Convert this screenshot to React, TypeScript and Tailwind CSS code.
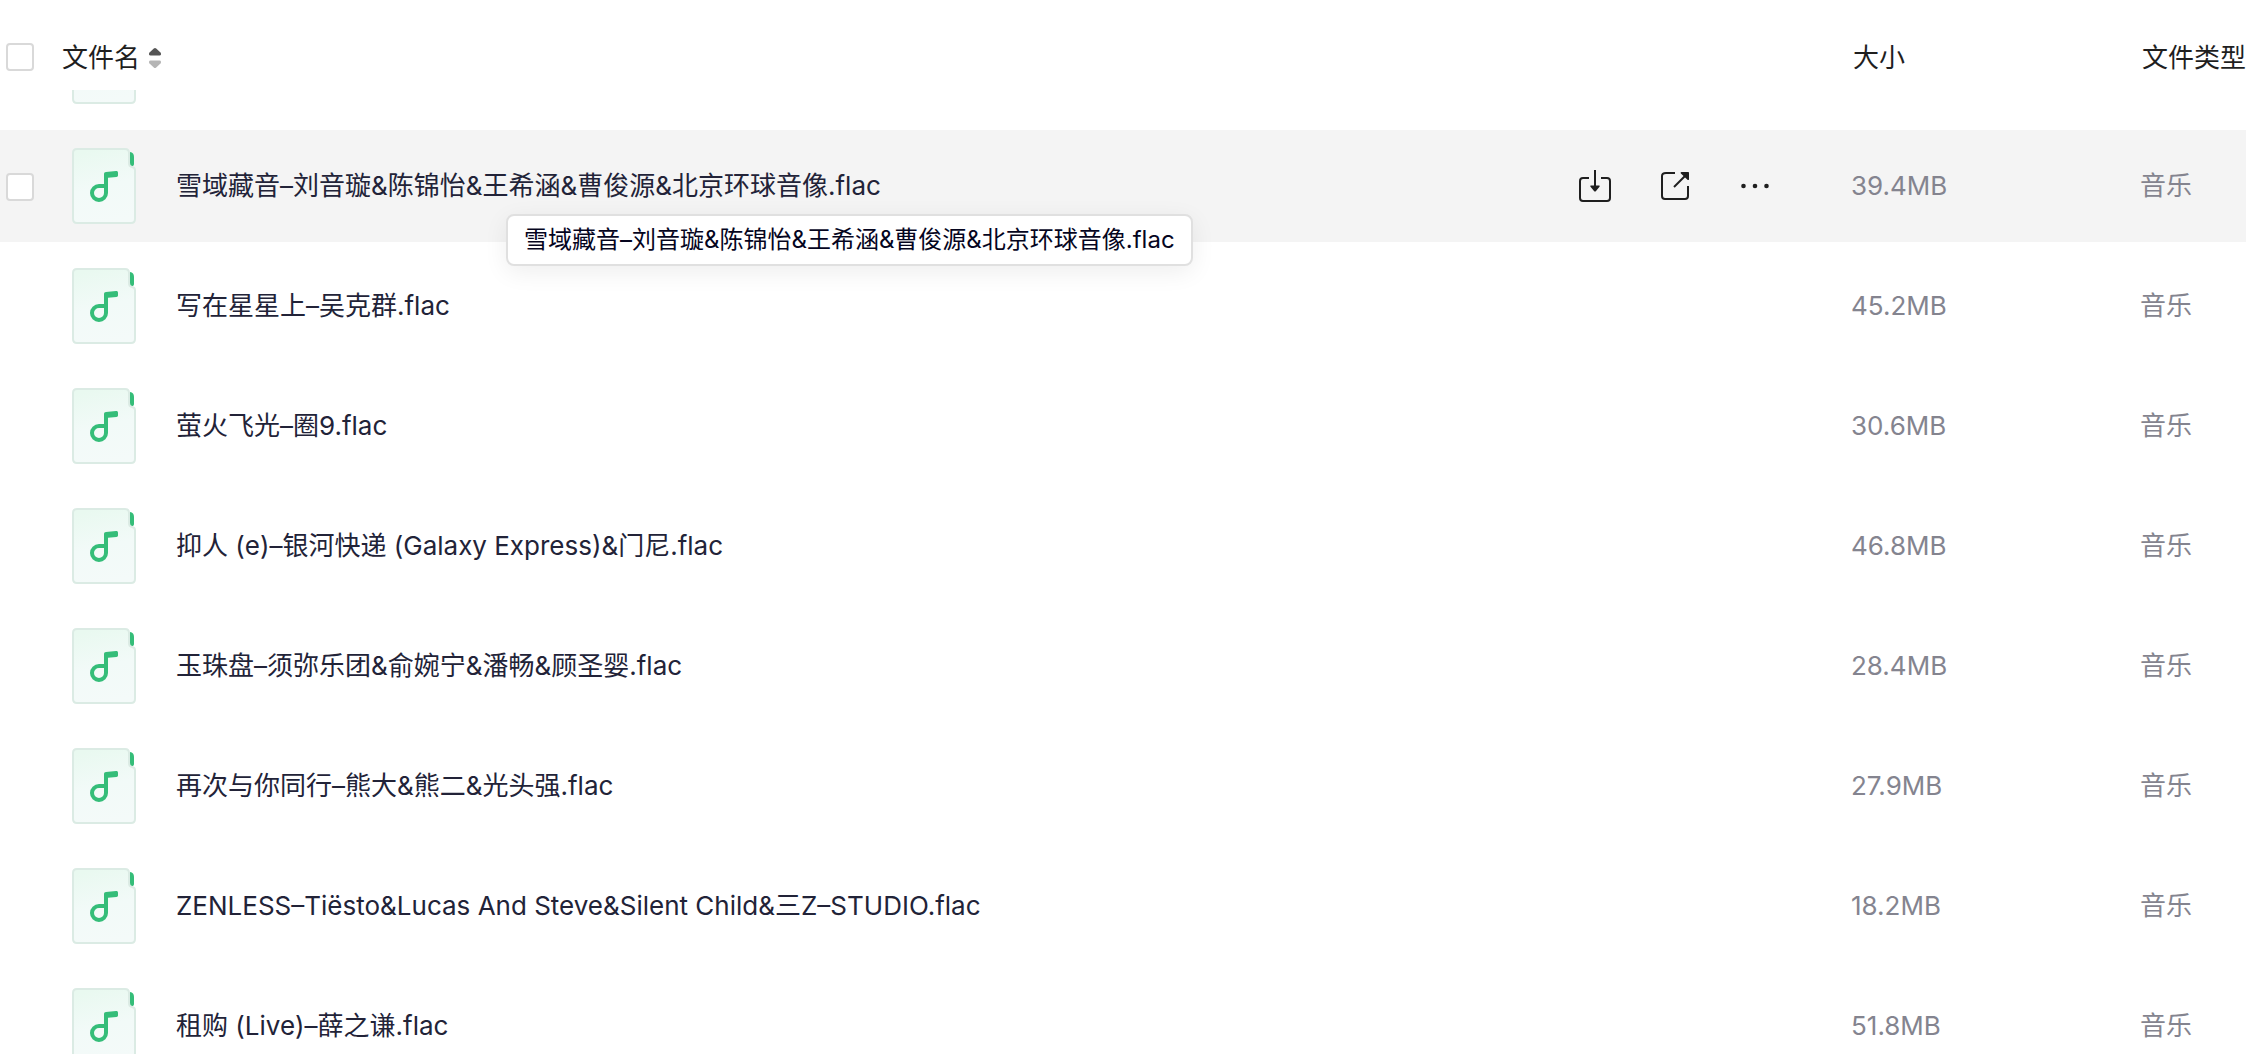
type Song = { name: string; size: string; active?: boolean };

const songs: Song[] = [
  { name: "雪域藏音–刘音璇&陈锦怡&王希涵&曹俊源&北京环球音像.flac", size: "39.4MB", active: true },
  { name: "写在星星上–吴克群.flac", size: "45.2MB" },
  { name: "萤火飞光–圈9.flac", size: "30.6MB" },
  { name: "抑人 (e)–银河快递 (Galaxy Express)&门尼.flac", size: "46.8MB" },
  { name: "玉珠盘–须弥乐团&俞婉宁&潘畅&顾圣婴.flac", size: "28.4MB" },
  { name: "再次与你同行–熊大&熊二&光头强.flac", size: "27.9MB" },
  { name: "ZENLESS–Tiësto&Lucas And Steve&Silent Child&三Z–STUDIO.flac", size: "18.2MB" },
  { name: "租购 (Live)–薛之谦.flac", size: "51.8MB" },
];

function MusicFileIcon() {
  return (
    <svg width="64" height="76" viewBox="0 0 64 76" className="shrink-0" aria-hidden="true">
      <defs>
        <linearGradient id="sheet" x1="0.4" y1="0" x2="0.6" y2="1">
          <stop offset="0" stopColor="#e9f9f0" />
          <stop offset="0.5" stopColor="#f2faf8" />
          <stop offset="1" stopColor="#f4faf9" />
        </linearGradient>
      </defs>
      <path d="M58 4c2.600.300 4 2 4 5v6.500c0 1.500-.5 2.500-1.500 2.500H58z" fill="#35bd79" />
      <path
        d="M5 1h48c2.600 0 4 1.400 4 4v10c0 2.600 1 3.600 3 3.900 2 .3 3 1.300 3 3.100v49c0 2.600-1.400 4-4 4H5c-2.600 0-4-1.400-4-4V5c0-2.600 1.400-4 4-4z"
        fill="url(#sheet)"
        stroke="#dbebe4"
        strokeWidth="2"
      />
      <path
        fillRule="evenodd"
        fill="#35bd79"
        d="M32 26c0-1.200.8-1.900 2-2l10-.9c1.300-.1 2 .6 2 1.800v2.300c0 1-.6 1.600-1.600 1.700L36 29.800V45a9 9 0 1 1-9-9h5zM32 40h-5a5 5 0 1 0 5 5z"
      />
    </svg>
  );
}

function DownloadIcon() {
  return (
    <svg width="40" height="40" viewBox="0 0 40 40" fill="none" stroke="#1f1f1f" strokeWidth="2" aria-hidden="true">
      <path d="M14 12H8c-2 0-3 1-3 3v17c0 2 1 3 3 3h24c1.500 0 3-1 3-3V15c0-2-1-3-3-3h-6" />
      <path d="M20 4v16" />
      <path d="M16 19.500h8c.7 0 .9.700.500 1.200l-3.500 4.300c-.5.700-1.500.7-2 0l-3.500-4.300c-.4-.5-.2-1.200.5-1.200z" fill="#1f1f1f" stroke="none" />
    </svg>
  );
}

function ShareIcon() {
  return (
    <svg width="40" height="40" viewBox="0 0 40 40" fill="none" stroke="#1f1f1f" strokeWidth="2" aria-hidden="true">
      <path d="M20 7h-9c-2 0-4 1-4 3v20c0 2 1 3 3 3h20c2 0 3-1 3-3V20" />
      <path d="M19 21L30 10" />
      <path d="M26.500 6H33c.6 0 1 .4 1 1v6.200c0 .8-.9 1.200-1.500.6l-6.600-6.200c-.6-.6-.2-1.600.6-1.600z" fill="#1f1f1f" stroke="none" />
    </svg>
  );
}

function MoreIcon() {
  return (
    <svg width="40" height="40" viewBox="0 0 40 40" fill="#1f1f1f" aria-hidden="true">
      <circle cx="8.500" cy="20" r="2.300" />
      <circle cx="20" cy="20" r="2.300" />
      <circle cx="31.500" cy="20" r="2.300" />
    </svg>
  );
}

function SortIcon() {
  return (
    <svg width="14" height="22" viewBox="0 0 14 22" aria-hidden="true">
      <path d="M5.800 1.500c.8-.7 1.600-.7 2.400 0l4.300 4c1 1 .7 3-1 3h-9c-1.700 0-2-2-1-3z" fill="#555" />
      <path d="M5.800 20.500c.8.700 1.600.7 2.400 0l4.300-4c1-1 .7-3-1-3h-9c-1.700 0-2 2-1 3z" fill="#b5b5b5" />
    </svg>
  );
}

function Checkbox({ label }: { label: string }) {
  return (
    <input
      type="checkbox"
      aria-label={label}
      className="block size-7 appearance-none rounded border-2 border-[#d9d9d9] bg-white checked:bg-[#35bd79]"
    />
  );
}

function SongRow({ song }: { song: Song }) {
  const cell = song.active
    ? "border-b-8 border-transparent bg-[#f4f4f4] bg-clip-padding p-0"
    : "border-b-8 border-transparent p-0";
  return (
    <tr className="h-[120px]">
      <td className={cell}>
        <div className="pl-1.5 pt-0.5">{song.active && <Checkbox label={song.name} />}</div>
      </td>
      <td className={cell}>
        <div className="relative flex h-28 items-center pl-2.5 pr-[76px]">
          <MusicFileIcon />
          <span className="min-w-0 flex-1 truncate pl-10 text-[#222338]">{song.name}</span>
          {song.active && (
            <div className="flex gap-10">
              <button type="button" aria-label="下载"><DownloadIcon /></button>
              <button type="button" aria-label="分享"><ShareIcon /></button>
              <button type="button" aria-label="更多"><MoreIcon /></button>
            </div>
          )}
          {song.active && (
            <div
              role="tooltip"
              className="absolute left-[444px] top-[84px] z-10 flex h-[52px] items-center whitespace-nowrap rounded-lg border-2 border-[#e0e0e0] bg-white px-4 text-2xl text-[#05051e] shadow-[0_6px_24px_rgba(0,0,0,0.07)]"
            >
              {song.name}
            </div>
          )}
        </div>
      </td>
      <td className={cell}>
        <span className="text-[#84848f]">{song.size}</span>
      </td>
      <td className={cell}>
        <span className="text-[#84848f]">音乐</span>
      </td>
    </tr>
  );
}

export default function App() {
  return (
    <main className="h-screen overflow-hidden bg-white font-['Inter','Noto_Sans_CJK_SC',sans-serif] text-[26px] leading-9 text-[#1f1f1f]">
      <table className="w-full table-fixed border-separate border-spacing-0 text-left">
        <colgroup>
          <col className="w-[62px]" />
          <col />
          <col className="w-[289px]" />
          <col className="w-[106px]" />
        </colgroup>
        <thead>
          <tr className="h-[90px]">
            <th className="p-0 pt-6">
              <div className="pl-1.5"><Checkbox label="全选" /></div>
            </th>
            <th className="p-0 pt-[26px] font-normal">
              <button type="button" className="flex items-center gap-2">
                文件名
                <SortIcon />
              </button>
            </th>
            <th className="p-0 pl-0.5 pt-[26px] font-normal">大小</th>
            <th className="whitespace-nowrap p-0 pl-0.5 pt-[26px] font-normal">文件类型</th>
          </tr>
        </thead>
        <tbody>
          <tr className="h-10">
            <td className="p-0" />
            <td className="p-0" colSpan={3}>
              <div className="flex h-10 items-end overflow-hidden pb-[26px] pl-2.5">
                <MusicFileIcon />
              </div>
            </td>
          </tr>
          {songs.map((song) => (
            <SongRow key={song.name} song={song} />
          ))}
        </tbody>
      </table>
    </main>
  );
}
